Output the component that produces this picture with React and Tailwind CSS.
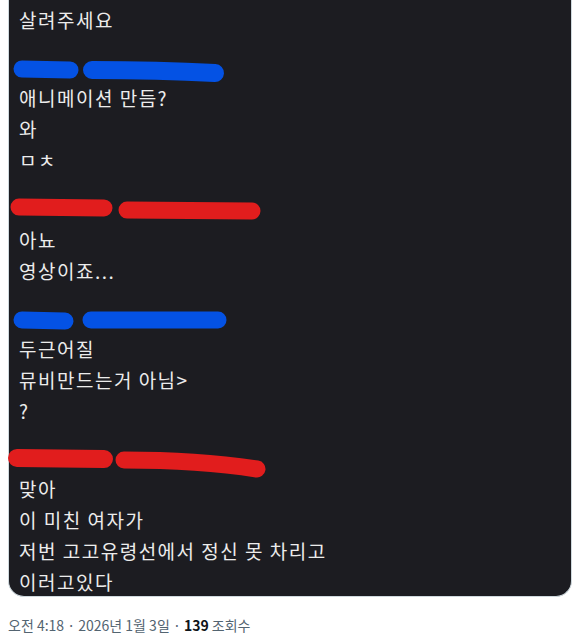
const BLUE = '#0452e4'
const RED = '#e11d1d'

// scribble rows drawn over redacted names (coords relative to panel inner left edge)
const marks = [
  [
    { d: 'M13 15 L61 16', c: BLUE, w: 17 },
    { d: 'M83 16 Q150 16 206 19', c: BLUE, w: 18 },
  ],
  [
    { d: 'M10 11 L95 12', c: RED, w: 17 },
    { d: 'M118 14 L243 15', c: RED, w: 17 },
  ],
  [
    { d: 'M13 15 L56 16', c: BLUE, w: 17 },
    { d: 'M82 15 L209 15', c: BLUE, w: 17 },
  ],
  [
    { d: 'M8 13 L95 14', c: RED, w: 18 },
    { d: 'M115 15 Q190 15 248 24', c: RED, w: 17 },
  ],
]

const groups = [
  { mt: 'mt-[19px]', lines: ['애니메이션 만듬?', '와', 'ㅁㅊ'] },
  { mt: 'mt-[21px]', lines: ['아뇨', '영상이죠...'] },
  { mt: 'mt-[19px]', lines: ['두근어질', '뮤비만드는거 아님>', '?'] },
  { mt: 'mt-[19px]', lines: ['맞아', '이 미친 여자가', '저번 고고유령선에서 정신 못 차리고', '이러고있다'] },
]

function NameRow({ strokes }) {
  return (
    <div className="h-[28px] -ml-[10px]">
      <svg width="300" height="28" className="overflow-visible">
        {strokes.map((s, i) => (
          <path key={i} d={s.d} stroke={s.c} strokeWidth={s.w} strokeLinecap="round" fill="none" />
        ))}
      </svg>
    </div>
  )
}

export default function App() {
  return (
    <div className="bg-white w-[579px] h-[639px] overflow-hidden pl-[8px]" style={{ fontFamily: '"Noto Sans CJK KR", "Liberation Sans", sans-serif' }}>
      <div className="w-[564px] h-[597px] bg-[#1c1c21] border border-t-0 border-[#cfd9de] rounded-b-[16px] pl-[10px] pt-[4px] text-[19px] leading-[31px] tracking-[1.5px] text-[#ececec]">
        <p>살려주세요</p>
        {groups.map((g, i) => (
          <div key={i} className={g.mt}>
            <NameRow strokes={marks[i]} />
            {g.lines.map((l, j) => (
              <p key={j}>{l}</p>
            ))}
          </div>
        ))}
      </div>
      <div className="mt-[18px] text-[14px] leading-[20px] text-[#536471]">
        오전 4:18 · 2026년 1월 3일 · <span className="font-bold text-[#0f1419]">139</span> 조회수
      </div>
    </div>
  )
}
